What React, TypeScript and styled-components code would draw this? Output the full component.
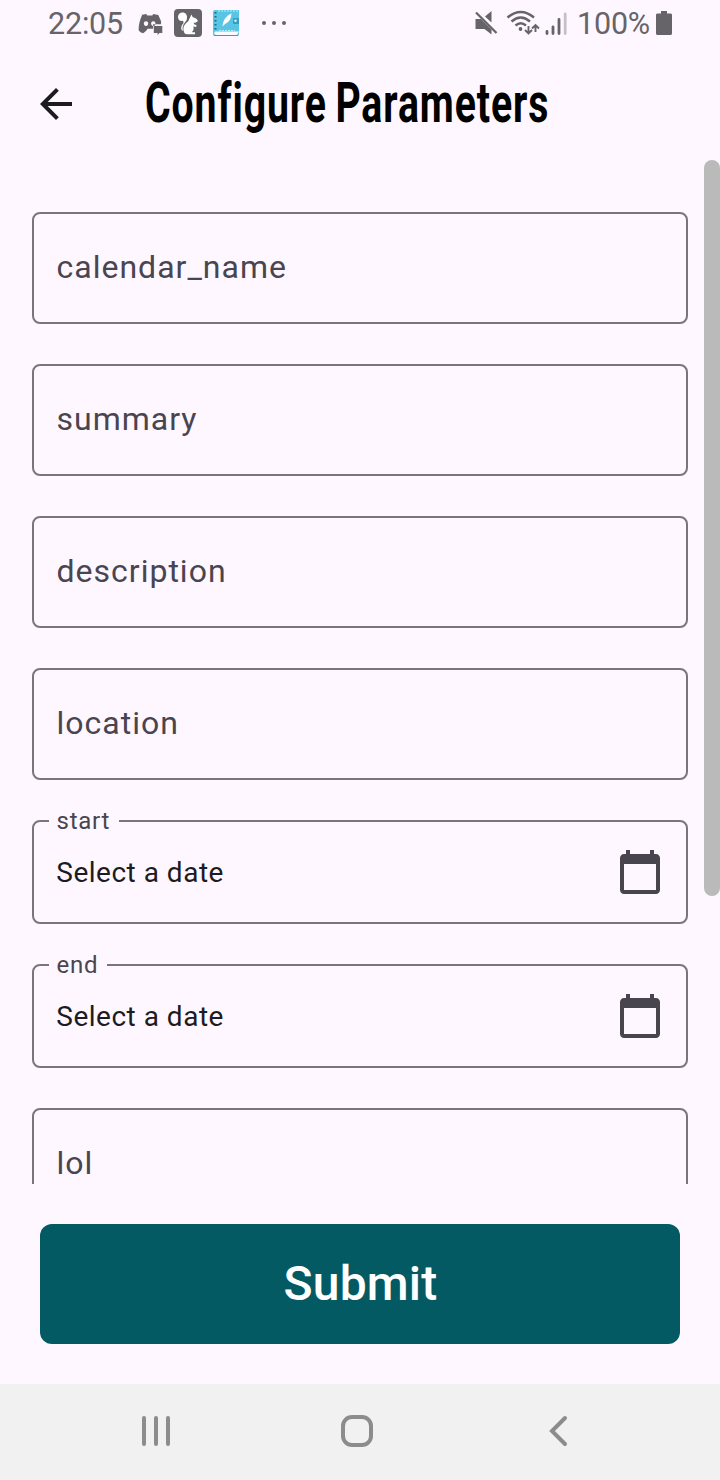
import React from 'react';
import styled, { createGlobalStyle } from 'styled-components';

const GlobalStyle = createGlobalStyle`
  * { box-sizing: border-box; }
  body { margin: 0; background: #fef7ff; font-family: Roboto, sans-serif; }
  svg { display: block; flex: none; }
`;

const Screen = styled.div`
  width: 720px;
  height: 1480px;
  display: flex;
  flex-direction: column;
  overflow: hidden;
  background: #fef7ff;
`;

const StatusBar = styled.header`
  height: 48px;
  flex: none;
  display: flex;
  justify-content: space-between;
  padding: 0 48px;
  color: #666469;
`;

const StatusGroup = styled.div`
  display: flex;
  align-items: center;
  height: 48px;
`;

const StatusText = styled.span<{ $width: number }>`
  width: ${(p) => p.$width}px;
  font-size: 30.5px;
  line-height: 48px;
  letter-spacing: -0.2px;
  white-space: nowrap;
`;

const AppBar = styled.div`
  height: 112px;
  flex: none;
  display: flex;
  align-items: center;
  padding: 0 40px;
`;

const BackButton = styled.button`
  width: 105px;
  padding: 0;
  border: 0;
  background: none;
`;

const Title = styled.h1`
  margin: 0;
  padding-bottom: 3px;
  width: 403px;
  font-size: 56px;
  font-weight: 700;
  line-height: 80px;
  letter-spacing: 1.3px;
  word-spacing: -3px;
  font-variant-ligatures: none;
  white-space: nowrap;
  color: #000;
  transform: scaleX(0.7);
  transform-origin: left center;
`;

const ScrollArea = styled.main`
  height: 1024px;
  flex: none;
  display: flex;
  justify-content: space-between;
  overflow: hidden;
  padding-left: 32px;
`;

const Form = styled.div`
  width: 656px;
  padding-top: 52px;
  display: flex;
  flex-direction: column;
  gap: 40px;
`;

const ScrollThumb = styled.div`
  width: 16px;
  height: 736px;
  border-radius: 8px;
  background: #bababa;
`;

const Field = styled.div<{ $height: number }>`
  position: relative;
  flex: none;
  height: ${(p) => p.$height}px;
  display: flex;
  align-items: center;
  justify-content: space-between;
  padding: 0 22px;
  border: 2px solid #79747e;
  border-radius: 8px;
`;

const Placeholder = styled.span`
  padding: 0 0 2px 0.5px;
  font-size: 32px;
  line-height: 48px;
  letter-spacing: 1px;
  color: #49454f;
`;

const FloatingLabel = styled.span`
  position: absolute;
  left: 15px;
  top: -17px;
  padding: 0 8.5px 0 7.5px;
  font-size: 24px;
  line-height: 32px;
  letter-spacing: 0.75px;
  background: #fef7ff;
  color: #49454f;
`;

const DateValue = styled.span`
  padding: 2px 0 0 0.3px;
  font-size: 28px;
  line-height: 40px;
  letter-spacing: 0.5px;
  color: #1d1b20;
`;

const Footer = styled.div`
  height: 200px;
  flex: none;
  padding: 40px;
`;

const SubmitButton = styled.button`
  width: 640px;
  height: 120px;
  padding: 0 0 2px 1px;
  border: 0;
  border-radius: 12px;
  background: #045a62;
  color: #fff;
  font-family: Roboto, sans-serif;
  font-size: 48px;
  font-weight: 500;
  letter-spacing: 0.2px;
`;

const NavBar = styled.nav`
  height: 96px;
  flex: none;
  display: flex;
  align-items: center;
  gap: 169px;
  padding: 0 0 2px 140px;
  background: #f1f1f1;
`;

const BackKey = styled.div`
  margin-left: 7px;
`;

const NotificationIcons = () => (
  <svg width="154" height="32" viewBox="136 8 154 32">
    <path fill="#666469" fillRule="evenodd" d="M142 15l5-1 1 1.500h5l1-1.500 5 1 2.800 6.500V24.500h-8v4.500h-5.500l-1 1.500-1.500 1.500-2 1.500c-1.800-.3-3.500-1.500-4.500-3 0-6 1.200-10.500 3.700-16zM146.700 21.300a2.200 2.400 0 1 0 .01 0zM154 21.300a2.200 2.400 0 1 0 .01 0z" transform="translate(-.4 .3) scale(.998 .98)" />
    <path fill="#666469" d="M153.800 26h8.500v7H159.500l-2 2v-2h-3.700z" />
    <rect x="174" y="9" width="28" height="28" rx="4" fill="#666469" />
    <path fill="#fff" d="M183.300 23.500c.4-1.200.3-2.200-.6-2.700-2.700.6-4.700-1.200-4.700-3.900 0-2.500 2-4.300 4.500-4.300 3 0 4.700 2.200 4.500 5.200 0 2-1 3.500-2.300 5-1.800 2.400-2.700 5-1.700 8.200-3-1.700-1.700-5.500.3-7.500z" />
    <path fill="#fff" d="M183.700 31c-1.200-4.500 1.600-7.500 4.300-9.500.9-.9.900-2.500 2-3.700l1.300-3.300 1.500 2.800c2.500.3 4.300 1.600 5 3.500-.5 1.500-2 2-4.300 2l1 1.800 2 .4-.3 1.900-3-.3c1 2.500.2 4.200-1.400 5.700h3.200v2h-8c-1.800 0-2.800-1-3.300-3.300z" />
    <path d="M213 12q0-2 2-2h24v24q0 2-2 2h-22q-2 0-2-2z" fill="#58c5e5" />
    <path d="M215 31.500h24l-2 3.500h-21q-3-1-1-3.500z" fill="#f7fbfd" />
    <path d="M214 35.500h24" stroke="#309fc4" />
    <path d="M215.500 12v19" stroke="#236985" strokeWidth="2" strokeDasharray="1.500 2.500" />
    <path d="M218 11h20M219 30.500h16" stroke="#b9edfa" strokeDasharray="2 1" />
    <path d="M222.500 26.500c.5-6 3-10.500 9-13-.3 6-3 9-6.500 10.500z" fill="#fff" />
    <path d="M233 18h6v6h-6z" fill="#369fc5" />
    <circle cx="235.500" cy="20.800" r="1.200" fill="#d4f5ff" />
    <g fill="#666469"><circle cx="264" cy="23" r="2" /><circle cx="274" cy="23" r="2" /><circle cx="284" cy="23" r="2" /></g>
  </svg>
);

const SignalIcons = () => (
  <svg width="103" height="32" viewBox="474 8 103 32">
    <g fill="#666469">
      <path d="M475.500 19h5.500l10.500 10.500v5l-7-5.500h-9zM485 16.500l6.500-5.500V22.500z" />
      <path d="M476 12.500l20.500 20.500" fill="none" stroke="#666469" strokeWidth="2.300" />
      <g fill="none" stroke="#666469" strokeWidth="2.500">
        <path d="M507.500 17.500q13.200-11 26.500 0M511.500 21.500q9.200-8 18.500 0M515.500 25.500q5.200-4.500 10.500 0" />
        <path d="M528.500 26v7M525 30l3.500 3.500 3.500-3.500M535.500 32v-7M532 28.500l3.500-3.500 3.500 3.500" strokeWidth="1.900" />
      </g>
      <circle cx="520.500" cy="29" r="1.900" />
    </g>
    <g stroke="#666469" strokeWidth="2.800" strokeLinecap="round">
      <path d="M547 31.500v2M553 27v6.500M559 19.500v14" />
      <path d="M565.200 14v19.500" stroke="#c5c0c7" />
    </g>
  </svg>
);

const BatteryIcon = () => (
  <svg width="16" height="26" viewBox="0 0 16 26">
    <path fill="#666469" d="M5 0h6v2.500h4l1 1V23l-1 1H1l-1-1V3.500l1-1h4z" />
  </svg>
);

const CalendarIcon = () => (
  <svg width="48" height="48" viewBox="0 0 24 24">
    <path fill="#49454f" d="M20 3h-1V1h-2v2H7V1H5v2H4c-1.100 0-2 .9-2 2v16c0 1.100.9 2 2 2h16c1.100 0 2-.9 2-2V5c0-1.100-.9-2-2-2zm0 18H4V8h16v13z" />
  </svg>
);

const fields = [
  { name: 'calendar_name', date: false },
  { name: 'summary', date: false },
  { name: 'description', date: false },
  { name: 'location', date: false },
  { name: 'start', date: true },
  { name: 'end', date: true },
  { name: 'lol', date: false },
];

export default function App() {
  return (
    <Screen>
      <GlobalStyle />
      <StatusBar>
        <StatusGroup>
          <StatusText $width={88}>22:05</StatusText>
          <NotificationIcons />
        </StatusGroup>
        <StatusGroup>
          <SignalIcons />
          <StatusText $width={79}>100%</StatusText>
          <BatteryIcon />
        </StatusGroup>
      </StatusBar>
      <AppBar>
        <BackButton aria-label="Back">
          <svg width="32" height="32" viewBox="4 4 16 16">
            <path fill="#1d1b20" d="M20 11H7.830l5.590-5.590L12 4l-8 8 8 8 1.410-1.410L7.830 13H20v-2z" />
          </svg>
        </BackButton>
        <Title>Configure Parameters</Title>
      </AppBar>
      <ScrollArea>
        <Form>
          {fields.map(({ name, date }) =>
            date ? (
              <Field key={name} $height={104}>
                <FloatingLabel>{name}</FloatingLabel>
                <DateValue>Select a date</DateValue>
                <CalendarIcon />
              </Field>
            ) : (
              <Field key={name} $height={112}>
                <Placeholder>{name}</Placeholder>
              </Field>
            ),
          )}
        </Form>
        <ScrollThumb />
      </ScrollArea>
      <Footer>
        <SubmitButton>Submit</SubmitButton>
      </Footer>
      <NavBar>
        <svg width="32" height="32" viewBox="0 0 32 32">
          <path d="M4 3v26M16 3v26M28 3v26" stroke="#8c8c8c" strokeWidth="4" strokeLinecap="round" />
        </svg>
        <svg width="32" height="32" viewBox="0 0 32 32">
          <rect x="2" y="2" width="28" height="28" rx="9" fill="none" stroke="#8c8c8c" strokeWidth="4" />
        </svg>
        <BackKey>
          <svg width="20" height="32" viewBox="0 0 20 32">
            <path d="M16 3L3 16l13 13" fill="none" stroke="#8c8c8c" strokeWidth="4" strokeLinecap="round" />
          </svg>
        </BackKey>
      </NavBar>
    </Screen>
  );
}
